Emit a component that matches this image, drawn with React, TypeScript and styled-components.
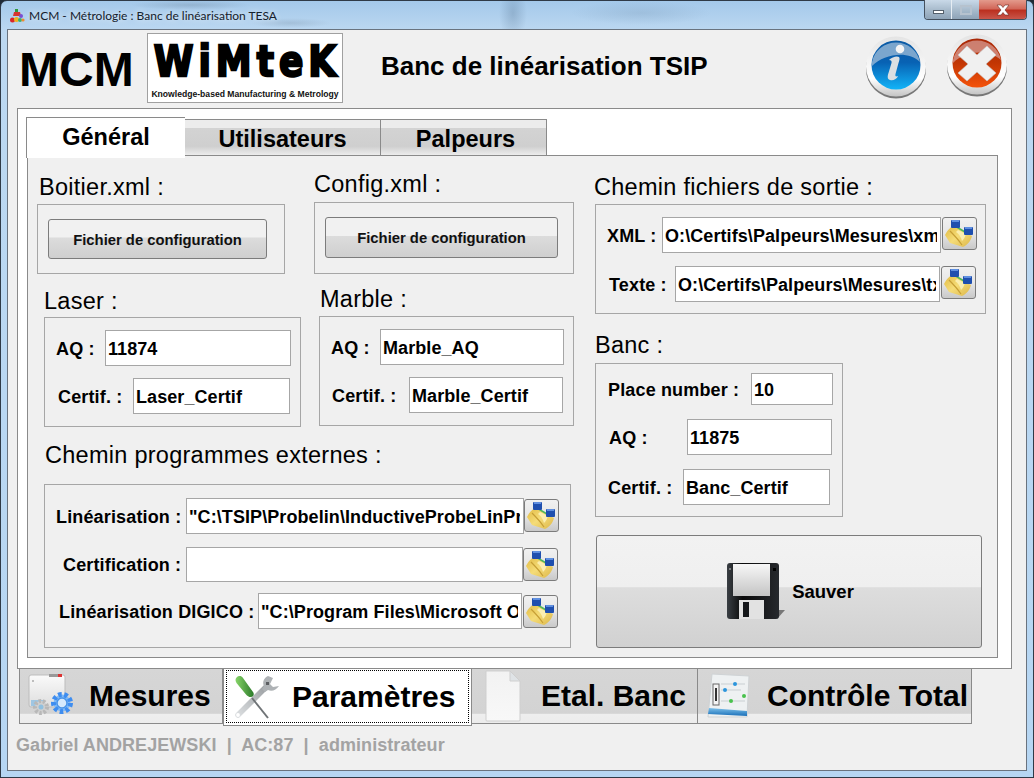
import React from "react";
import styled, { createGlobalStyle } from "styled-components";

function AppIcon() {
    return (
        <svg width="16" height="16" viewBox="0 0 16 16">
            <rect x="6" y="1" width="3" height="3" fill="#2f9a3c" />
            <path d="M5 4h6l1 4H4z" fill="#d8342e" />
            <circle cx="12" cy="8" r="2" fill="#7a4fd0" />
            <circle cx="3.500" cy="12" r="2.500" fill="#d8262a" />
            <circle cx="7.500" cy="11.500" r="2.500" fill="#f0b020" />
            <circle cx="11" cy="12" r="2" fill="#38b070" />
            <circle cx="14" cy="12" r="1.600" fill="#f08a2e" />
        </svg>
    );
}

function InfoIcon() {
    return (
        <svg width="64" height="64" viewBox="0 0 64 64">
            <defs>
                <linearGradient id="infoBlue" x1="0" y1="0" x2="0" y2="1">
                    <stop offset="0" stopColor="#0a5aa4" />
                    <stop offset="0.45" stopColor="#0862b4" />
                    <stop offset="1" stopColor="#12b4f8" />
                </linearGradient>
                <linearGradient id="ringA" x1="0" y1="0" x2="0" y2="1">
                    <stop offset="0" stopColor="#e4e4e4" />
                    <stop offset="0.7" stopColor="#ffffff" />
                    <stop offset="1" stopColor="#c4c4c4" />
                </linearGradient>
            </defs>
            <ellipse cx="32" cy="34" rx="30" ry="29.500" fill="#777" />
            <circle cx="32" cy="31.500" r="30" fill="url(#ringA)" />
            <circle cx="32" cy="30" r="24.500" fill="url(#infoBlue)" />
            <path d="M8 27a24.500 24.500 0 0 1 48 0C44 15 20 19 8 31z" fill="#8fb3d3" opacity="0.85" />
            <circle cx="36" cy="14" r="4.300" fill="#f4f4f4" />
            <path d="M25 25c3-3 8-4.500 10-3 1 1 .5 3-.5 6l-3 11c-.5 2.500.5 3 2.500 2-1 3-5 5-8 4-3-1-2.500-4-1.500-7l3-10c.5-2-.5-3-2.500-3z" fill="#dcdfe2" />
        </svg>
    );
}

function CloseIcon() {
    return (
        <svg width="64" height="64" viewBox="0 0 64 64">
            <defs>
                <linearGradient id="closeRed" x1="0" y1="0" x2="0" y2="1">
                    <stop offset="0" stopColor="#a82808" />
                    <stop offset="0.5" stopColor="#c23604" />
                    <stop offset="1" stopColor="#f4520a" />
                </linearGradient>
                <linearGradient id="ringB" x1="0" y1="0" x2="0" y2="1">
                    <stop offset="0" stopColor="#e4e4e4" />
                    <stop offset="0.7" stopColor="#ffffff" />
                    <stop offset="1" stopColor="#c4c4c4" />
                </linearGradient>
            </defs>
            <ellipse cx="32" cy="34" rx="30" ry="29.500" fill="#777" />
            <circle cx="32" cy="31.500" r="30" fill="url(#ringB)" />
            <circle cx="32" cy="30" r="24.500" fill="url(#closeRed)" />
            <path d="M8 27a24.500 24.500 0 0 1 48 0C44 16 20 17 8 30z" fill="#d79c94" opacity="0.75" />
            <path d="M22 13l10 9 10-9 9 9-10 9 10 9-9 8-10-9-10 9-9-8 10-9-10-9z" fill="#f0f0f0" stroke="#c9c9c9" strokeWidth="0.600" />
        </svg>
    );
}

function FolderIcon() {
    return (
        <svg width="33" height="31" viewBox="0 0 33 31">
            <defs>
                <linearGradient id="folderFan" x1="0" y1="0" x2="1" y2="1">
                    <stop offset="0" stopColor="#e0b840" />
                    <stop offset="0.5" stopColor="#f5dc78" />
                    <stop offset="1" stopColor="#dcb648" />
                </linearGradient>
            </defs>
            <path d="M2 17C5 11 9 8 12 7l9 7 8 4c-1 5-5 9-9 11L7 25z" fill="url(#folderFan)" />
            <path d="M7 13c4 4 8 8 12 14" stroke="#c79f36" strokeWidth="1.200" fill="none" />
            <path d="M15 12l8 4c-1 3-2 5-4 7-1-4-3-7-6-9z" fill="#fbeeb0" />
            <path d="M12 8l10 6" stroke="#4fb65a" strokeWidth="1.500" />
            <rect x="8" y="2" width="9" height="8" rx="1" fill="#1f4fae" />
            <rect x="9" y="2" width="7" height="2" fill="#5f8fe0" />
            <rect x="21" y="9" width="9" height="8" rx="1" fill="#1f4fae" />
            <rect x="22" y="9" width="7" height="2" fill="#5f8fe0" />
        </svg>
    );
}

function FloppyIcon() {
    return (
        <svg width="60" height="58" viewBox="0 0 60 58">
            <defs>
                <linearGradient id="floppyLabel" x1="0" y1="0" x2="0" y2="1">
                    <stop offset="0" stopColor="#f7f7f7" />
                    <stop offset="1" stopColor="#c4c4c4" />
                </linearGradient>
                <linearGradient id="floppyBody" x1="0" y1="0" x2="1" y2="0">
                    <stop offset="0" stopColor="#3a3f44" />
                    <stop offset="0.3" stopColor="#0a0a0a" />
                    <stop offset="1" stopColor="#26292d" />
                </linearGradient>
            </defs>
            <path d="M50 56l8-9h-6z" fill="#777" />
            <rect x="0" y="0" width="52" height="56" rx="3" fill="url(#floppyBody)" />
            <rect x="6" y="1" width="37" height="32" fill="url(#floppyLabel)" />
            <rect x="12" y="37" width="25" height="19" fill="#e2e2e2" />
            <rect x="16" y="39" width="6" height="15" fill="#15171a" />
            <circle cx="3" cy="6" r="0.800" fill="#ddd" />
            <rect x="46" y="5" width="3" height="3" fill="#000" />
        </svg>
    );
}

function MesuresIcon() {
    return (
        <svg width="50" height="46" viewBox="0 0 50 46">
            <defs>
                <linearGradient id="winBody" x1="0" y1="0" x2="0" y2="1">
                    <stop offset="0" stopColor="#fafafa" />
                    <stop offset="1" stopColor="#dedede" />
                </linearGradient>
            </defs>
            <rect x="1" y="2" width="36" height="32" rx="2" fill="url(#winBody)" stroke="#bdbdbd" />
            <rect x="21" y="1" width="13" height="3" fill="#999" />
            <rect x="30" y="1" width="4" height="3" fill="#d33" />
            <circle cx="5" cy="8" r="0.800" fill="#777" />
            <rect x="3" y="27" width="14" height="6" fill="#9fc6e2" />
            <circle cx="13" cy="34" r="6" fill="#d0d0d0" stroke="#b8b8b8" strokeWidth="4" strokeDasharray="2.500 1.700" />
            <circle cx="13" cy="34" r="2.500" fill="#8fc0e0" />
            <circle cx="34" cy="30" r="8.500" fill="#7fb9f5" stroke="#3e8df0" strokeWidth="5" strokeDasharray="3.500 2.500" />
            <circle cx="34" cy="30" r="5" fill="#d5e9fc" stroke="#4a94e8" strokeWidth="1.500" />
        </svg>
    );
}

function ToolsIcon() {
    return (
        <svg width="48" height="46" viewBox="0 0 48 46">
            <defs>
                <linearGradient id="toolGreen" x1="0" y1="0" x2="1" y2="0">
                    <stop offset="0" stopColor="#86d468" />
                    <stop offset="1" stopColor="#2c7a2a" />
                </linearGradient>
                <linearGradient id="toolSteel" x1="0" y1="1" x2="1" y2="0">
                    <stop offset="0" stopColor="#dadddf" />
                    <stop offset="1" stopColor="#9a9ea1" />
                </linearGradient>
            </defs>
            <path d="M5 41L34 12" stroke="url(#toolSteel)" strokeWidth="5.500" strokeLinecap="round" />
            <path d="M35 2c-4 2-6 6-4 10l-2 3 3 3 3-2c4 2 8 0 11-4l-6 1-3-3 3-6c-2-1-3-1-5-2z" fill="#aeb2b5" />
            <rect x="33" y="8" width="3" height="3" fill="#5c5f62" />
            <circle cx="5" cy="41" r="1.900" fill="#fff" />
            <path d="M19 24L35 44" stroke="#6f7376" strokeWidth="2" />
            <path d="M2.500 6c0-2 2-4 4-4 1.500 0 2.500 .5 3.500 2l10 14c1 1.500 1 3 0 4s-3 1.500-4.500 .5c-1-.5-1.500-1-2.500-2L3.500 9c-.5-1-1-2-1-3z" fill="url(#toolGreen)" />
        </svg>
    );
}

function DocumentIcon() {
    return (
        <svg width="36" height="52" viewBox="0 0 36 52">
            <defs>
                <linearGradient id="docSheet" x1="0" y1="0" x2="0" y2="1">
                    <stop offset="0" stopColor="#f2f2f2" />
                    <stop offset="1" stopColor="#f8f8f8" />
                </linearGradient>
            </defs>
            <path d="M1 1h24l10 10v39a1 1 0 0 1-1 1H2a1 1 0 0 1-1-1z" fill="url(#docSheet)" stroke="#cfcfcf" />
            <path d="M25 1v10h10z" fill="#dfe3e6" stroke="#cfcfcf" />
        </svg>
    );
}

function ControlIcon() {
    return (
        <svg width="46" height="46" viewBox="0 0 46 46">
            <defs>
                <linearGradient id="ctrlBar" x1="0" y1="0" x2="0" y2="1">
                    <stop offset="0" stopColor="#7cc0ea" />
                    <stop offset="1" stopColor="#1a6fb8" />
                </linearGradient>
            </defs>
            <path d="M5 1l37 2-2 41H1z" fill="#eef1f2" stroke="#cfd3d5" />
            <path d="M2 35l38 3v5L1 41z" fill="url(#ctrlBar)" />
            <rect x="6" y="11" width="6" height="21" fill="#f4f4f4" stroke="#666" />
            <rect x="8" y="15" width="2" height="13" fill="#333" />
            <path d="M14 11h24M14 17h20M14 28h24" stroke="#c9cfd2" />
            <circle cx="28" cy="11" r="2" fill="#2b95dc" />
            <circle cx="18" cy="17" r="2" fill="#2b95dc" />
            <circle cx="24" cy="28" r="2" fill="#48c24d" />
            <circle cx="37" cy="23" r="2" fill="#48c24d" />
        </svg>
    );
}

type FieldProps = {
    label: string;
    value: string;
    ml: number;
    mt: number;
    labelW: number;
    w: number;
    h?: number;
    folder?: number;
    folderTop?: number;
};

function Field({ label, value, ml, mt, labelW, w, h = 36, folder, folderTop = 0 }: FieldProps) {
    return (
        <FieldRow $ml={ml} $mt={mt}>
            <FieldLabel $w={labelW}>{label}</FieldLabel>
            <TextInput readOnly value={value} $w={w} $h={h} />
            {folder !== undefined && (
                <FolderButton $ml={folder} $mt={folderTop}>
                    <FolderIcon />
                </FolderButton>
            )}
        </FieldRow>
    );
}

export default function App() {
    return (
        <>
            <GlobalStyle />
            <Window>
                <TitleBar>
                    <AppIcon />
                    <TitleText>MCM - Métrologie : Banc de linéarisation TESA</TitleText>
                    <CaptionButtons>
                        <CaptionMin>
                            <span />
                        </CaptionMin>
                        <CaptionMax>
                            <span />
                        </CaptionMax>
                        <CaptionClose>
                            <svg width="18" height="12" viewBox="0 0 18 12">
                                <path d="M3 1h4l2 2.500L11 1h4l-4 5 4 5h-4L9 8.500 7 11H3l4-5z" fill="#fff" stroke="#6b2a22" strokeWidth="0.600" />
                            </svg>
                        </CaptionClose>
                    </CaptionButtons>
                </TitleBar>
                <Client>
                    <Header>
                        <Brand>MCM</Brand>
                        <Logo>
                            <LogoMark>WiMteK</LogoMark>
                            <LogoTagline>Knowledge-based Manufacturing &amp; Metrology</LogoTagline>
                        </Logo>
                        <AppTitle>Banc de linéarisation TSIP</AppTitle>
                        <OrbInfo>
                            <InfoIcon />
                        </OrbInfo>
                        <OrbClose>
                            <CloseIcon />
                        </OrbClose>
                    </Header>
                    <Panel>
                        <TabStrip>
                            <Tab $active $w={159}>Général</Tab>
                            <Tab $w={196}>Utilisateurs</Tab>
                            <Tab $w={166} $pl={4}>Palpeurs</Tab>
                        </TabStrip>
                        <Pane>
                            <LeftColumn>
                                <GroupRow>
                                    <Group $ml={0} $mt={17}>
                                        <Caption $ml={2} $mb={3}>Boitier.xml :</Caption>
                                        <Box $w={248} $h={70}>
                                            <ConfigButton $w={219} $h={40} $ml={10} $mt={14}>Fichier de configuration</ConfigButton>
                                        </Box>
                                    </Group>
                                    <Group $ml={29} $mt={14}>
                                        <Caption $ml={0} $mb={4}>Config.xml :</Caption>
                                        <Box $w={260} $h={72}>
                                            <ConfigButton $w={233} $h={41} $ml={10} $mt={14}>Fichier de configuration</ConfigButton>
                                        </Box>
                                    </Group>
                                </GroupRow>
                                <GroupRow $mt={11}>
                                    <Group $ml={7} $mt={2}>
                                        <Caption $ml={0} $mb={2}>Laser :</Caption>
                                        <Box $w={257} $h={110}>
                                            <Field label="AQ :" value="11874" ml={11} mt={12} labelW={49} w={186} />
                                            <Field label="Certif. :" value="Laser_Certif" ml={13} mt={12} labelW={75} w={157} />
                                        </Box>
                                    </Group>
                                    <Group $ml={18} $mt={0}>
                                        <Caption $ml={1} $mb={3}>Marble :</Caption>
                                        <Box $w={255} $h={110}>
                                            <Field label="AQ :" value="Marble_AQ" ml={11} mt={12} labelW={49} w={184} />
                                            <Field label="Certif. :" value="Marble_Certif" ml={12} mt={12} labelW={77} w={154} />
                                        </Box>
                                    </Group>
                                </GroupRow>
                                <Group $ml={7} $mt={14}>
                                    <Caption $ml={1} $mb={15}>Chemin programmes externes :</Caption>
                                    <Box $w={527} $h={164}>
                                        <Field label="Linéarisation :" value={'"C:\\TSIP\\Probelin\\InductiveProbeLinPro.exe"'} ml={11} mt={13} labelW={130} w={338} folder={0} folderTop={1} />
                                        <Field label="Certification :" value="" ml={18} mt={13} labelW={123} w={337} h={35} folder={0} folderTop={1} />
                                        <Field label="Linéarisation DIGICO :" value={'"C:\\Program Files\\Microsoft Office\\excel.exe"'} ml={14} mt={11} labelW={199} w={264} folder={1} folderTop={2} />
                                    </Box>
                                </Group>
                            </LeftColumn>
                            <RightColumn>
                                <Group $ml={0} $mt={17}>
                                    <Caption $ml={0} $mb={3}>Chemin fichiers de sortie :</Caption>
                                    <Box $w={391} $h={110} $ml={1}>
                                        <Field label="XML :" value="O:\Certifs\Palpeurs\Mesures\xml" ml={11} mt={12} labelW={55} w={279} folder={1} />
                                        <Field label="Texte :" value="O:\Certifs\Palpeurs\Mesures\txt" ml={13} mt={13} labelW={66} w={265} folder={1} />
                                    </Box>
                                </Group>
                                <Group $ml={0} $mt={17}>
                                    <Caption $ml={1} $mb={4}>Banc :</Caption>
                                    <Box $w={248} $h={154} $ml={1}>
                                        <Field label="Place number :" value="10" ml={12} mt={9} labelW={143} w={82} h={32} />
                                        <Field label="AQ :" value="11875" ml={13} mt={14} labelW={78} w={145} />
                                        <Field label="Certif. :" value="Banc_Certif" ml={12} mt={14} labelW={75} w={147} />
                                    </Box>
                                </Group>
                                <SaveButton>
                                    <FloppyIcon />
                                    <span>Sauver</span>
                                </SaveButton>
                            </RightColumn>
                        </Pane>
                    </Panel>
                    <NavBar>
                        <NavButton $w={204} $pad={8} $gap={11}>
                            <MesuresIcon />
                            <span>Mesures</span>
                        </NavButton>
                        <NavButton $active $w={249} $pad={9} $gap={11}>
                            <ToolsIcon />
                            <span>Paramètres</span>
                        </NavButton>
                        <NavButton $w={226} $pad={13} $gap={20}>
                            <DocumentIcon />
                            <span>Etal. Banc</span>
                        </NavButton>
                        <NavButton $w={274} $pad={9} $gap={14}>
                            <ControlIcon />
                            <span>Contrôle Total</span>
                        </NavButton>
                    </NavBar>
                    <Status>Gabriel ANDREJEWSKI  |  AC:87  |  administrateur</Status>
                </Client>
            </Window>
        </>
    );
}

const GlobalStyle = createGlobalStyle`
    * {
        box-sizing: border-box;
    }
    html,
    body {
        margin: 0;
        width: 1034px;
        height: 778px;
        overflow: hidden;
        background: #1f2a36;
        font-family: "Liberation Sans", Arial, sans-serif;
    }
`;

const Window = styled.div`
    width: 1034px;
    height: 778px;
    display: flex;
    flex-direction: column;
    border: 1px solid #2f3a47;
    border-radius: 7px 7px 0 0;
    background: linear-gradient(180deg, #a4c9ea 0, #bcd8f1 30px, #b6d6f3 100%);
`;

const TitleBar = styled.div`
    height: 28px;
    flex: none;
    display: flex;
    align-items: flex-start;
    padding: 7px 6px 0 8px;
    background:
        radial-gradient(ellipse 60px 5px at 190px 4px, rgba(90, 110, 130, 0.25), transparent),
        radial-gradient(ellipse 40px 5px at 290px 22px, rgba(90, 110, 130, 0.2), transparent),
        radial-gradient(ellipse 14px 28px at 512px 12px, rgba(80, 110, 140, 0.3), transparent),
        radial-gradient(ellipse 70px 12px at 640px 12px, rgba(90, 120, 150, 0.18), transparent);
`;

const TitleText = styled.div`
    margin-left: 4px;
    font-family: "Lato", sans-serif;
    font-size: 12px;
    line-height: 16px;
    color: #15202b;
    text-shadow: 0 0 6px rgba(255, 255, 255, 0.8);
`;

const CaptionButtons = styled.div`
    display: flex;
    margin-left: auto;
    margin-top: -8px;
    height: 20px;
    border: 1px solid #44505e;
    border-top: none;
    border-radius: 0 0 4px 4px;
    overflow: hidden;
`;

const CaptionMin = styled.div`
    width: 27px;
    display: flex;
    align-items: center;
    justify-content: center;
    background: linear-gradient(180deg, #c9d9e8, #a9bccd 50%, #8ea3b7);
    border-right: 1px solid #e6edf3;
    span {
        width: 11px;
        height: 4px;
        margin-top: 4px;
        background: #fff;
        border: 1px solid #55606c;
    }
`;

const CaptionMax = styled(CaptionMin)`
    width: 27px;
    border-right: none;
    span {
        width: 12px;
        height: 10px;
        margin-top: 0;
        background: transparent;
        border: 2px solid #b6c2ce;
    }
`;

const CaptionClose = styled.div`
    width: 47px;
    display: flex;
    align-items: center;
    justify-content: center;
    background: linear-gradient(180deg, #e39a8c, #d2685a 45%, #bb3020 55%, #c9564a);
`;

const Client = styled.div`
    margin: 0 6px 6px 6px;
    flex: 1;
    display: flex;
    flex-direction: column;
    background: #f0f0f0;
    border: 1px solid #69737f;
`;

const Header = styled.div`
    height: 78px;
    flex: none;
    display: flex;
    align-items: flex-start;
`;

const Brand = styled.div`
    margin: 12px 0 0 11px;
    width: 128px;
    font-size: 48px;
    line-height: 55px;
    font-weight: bold;
    color: #000;
`;

const Logo = styled.div`
    margin-top: 3px;
    width: 196px;
    height: 70px;
    background: #fff;
    border: 1px solid #a0a0a0;
    display: flex;
    flex-direction: column;
    align-items: center;
`;

const LogoMark = styled.div`
    margin-top: 8px;
    font-family: "DejaVu Sans", sans-serif;
    font-weight: bold;
    font-size: 36px;
    line-height: 40px;
    letter-spacing: 5px;
    margin-right: -5px;
    color: #000;
    -webkit-text-stroke: 2px #000;
    transform: scaleY(1.2);
`;

const LogoTagline = styled.div`
    margin-top: 7px;
    font-size: 8.6px;
    line-height: 11px;
    font-weight: bold;
    white-space: nowrap;
    color: #111;
`;

const AppTitle = styled.div`
    margin: 20px 0 0 38px;
    width: 483px;
    font-size: 26px;
    line-height: 32px;
    font-weight: bold;
    color: #000;
`;

const OrbInfo = styled.div`
    margin-top: 5px;
    width: 81px;
    height: 64px;
`;

const OrbClose = styled.div`
    margin-top: 3px;
    width: 64px;
    height: 64px;
`;

const Panel = styled.div`
    margin-left: 9px;
    width: 995px;
    height: 561px;
    flex: none;
    background: #fff;
    border: 1px solid #8a8a8a;
    padding: 8px 12px 0 8px;
    position: relative;
    z-index: 1;
`;

const TabStrip = styled.div`
    display: flex;
    align-items: flex-end;
    height: 39px;
    position: relative;
    z-index: 1;
`;

const Tab = styled.div<{ $active?: boolean; $w: number; $pl?: number }>`
    width: ${(p) => p.$w}px;
    height: ${(p) => (p.$active ? 41 : 37)}px;
    margin-bottom: ${(p) => (p.$active ? -2 : 0)}px;
    display: flex;
    justify-content: center;
    padding-top: 5px;
    padding-left: ${(p) => p.$pl ?? 0}px;
    font-size: 23.5px;
    line-height: 28px;
    font-weight: bold;
    color: #000;
    border: 1px solid #8a8a8a;
    border-bottom: ${(p) => (p.$active ? "none" : "1px solid #8a8a8a")};
    border-left-width: ${(p) => (p.$active ? 1 : 0)}px;
    border-right-width: ${(p) => (p.$active ? 0 : 1)}px;
    background: ${(p) =>
        p.$active
            ? "#fff"
            : "linear-gradient(180deg, #ececec 0, #ececec 22%, #d3d3d3 24%, #cfcfcf 75%, #ececec 100%)"};
`;

const Pane = styled.div`
    margin: -1px 0 0 1px;
    width: 971px;
    height: 503px;
    background: #f0f0f0;
    border: 1px solid #8a8a8a;
    padding-left: 9px;
    display: flex;
`;

const LeftColumn = styled.div`
    width: 537px;
    flex: none;
    display: flex;
    flex-direction: column;
`;

const RightColumn = styled.div`
    margin-left: 20px;
    display: flex;
    flex-direction: column;
`;

const GroupRow = styled.div<{ $mt?: number }>`
    display: flex;
    align-items: flex-start;
    margin-top: ${(p) => p.$mt ?? 0}px;
`;

const Group = styled.div<{ $ml: number; $mt: number }>`
    margin-left: ${(p) => p.$ml}px;
    margin-top: ${(p) => p.$mt}px;
`;

const Caption = styled.div<{ $ml: number; $mb: number }>`
    margin-left: ${(p) => p.$ml}px;
    margin-bottom: ${(p) => p.$mb}px;
    height: 28px;
    font-size: 23.5px;
    line-height: 28px;
    letter-spacing: 0.27px;
    color: #000;
    white-space: nowrap;
`;

const Box = styled.div<{ $w: number; $h: number; $ml?: number }>`
    width: ${(p) => p.$w}px;
    height: ${(p) => p.$h}px;
    margin-left: ${(p) => p.$ml ?? 0}px;
    border: 1px solid #a6a6a6;
    overflow: hidden;
`;

const ConfigButton = styled.div<{ $w: number; $h: number; $ml: number; $mt: number }>`
    width: ${(p) => p.$w}px;
    height: ${(p) => p.$h}px;
    margin: ${(p) => p.$mt}px 0 0 ${(p) => p.$ml}px;
    display: flex;
    align-items: center;
    justify-content: center;
    padding-top: 1px;
    border: 1px solid #7c7c7c;
    border-radius: 3px;
    font-size: 14.8px;
    font-weight: bold;
    color: #111;
    background: linear-gradient(180deg, #f1f1f1 0, #f1f1f1 45%, #dcdcdc 47%, #cfcfcf 100%);
`;

const FieldRow = styled.div<{ $ml: number; $mt: number }>`
    display: flex;
    align-items: center;
    margin: ${(p) => p.$mt}px 0 0 ${(p) => p.$ml}px;
`;

const FieldLabel = styled.div<{ $w: number }>`
    width: ${(p) => p.$w}px;
    flex: none;
    padding-top: 1px;
    font-size: 18px;
    line-height: 22px;
    letter-spacing: 0.15px;
    font-weight: bold;
    color: #000;
    white-space: nowrap;
`;

const TextInput = styled.input<{ $w: number; $h: number }>`
    width: ${(p) => p.$w}px;
    height: ${(p) => p.$h}px;
    flex: none;
    padding: 2px 3px 0 2px;
    border: 1px solid #a6a6a6;
    border-radius: 0;
    outline: none;
    background: #fff;
    font-family: "Liberation Sans", Arial, sans-serif;
    font-size: 18px;
    font-weight: bold;
    letter-spacing: 0.08px;
    color: #000;
`;

const FolderButton = styled.div<{ $ml: number; $mt: number }>`
    width: 35px;
    height: 33px;
    flex: none;
    align-self: flex-start;
    margin-left: ${(p) => p.$ml}px;
    margin-top: ${(p) => p.$mt}px;
    display: flex;
    align-items: center;
    justify-content: center;
    border: 1px solid #7c7c7c;
    border-radius: 3px;
    background: linear-gradient(180deg, #f1f1f1 0, #e6e6e6 50%, #c9c9c9 100%);
`;

const SaveButton = styled.div`
    width: 386px;
    height: 113px;
    margin: 18px 0 0 2px;
    display: flex;
    align-items: center;
    justify-content: center;
    gap: 5px;
    padding-left: 3px;
    border: 1px solid #7c7c7c;
    border-radius: 3px;
    font-size: 18.5px;
    font-weight: bold;
    color: #000;
    background: linear-gradient(180deg, #f2f2f2 0, #efefef 46%, #dddddd 46.500%, #d1d1d1 100%);
`;

const NavBar = styled.div`
    margin: -1px 0 0 11px;
    display: flex;
    align-items: flex-start;
    position: relative;
    z-index: 2;
`;

const NavButton = styled.div<{ $active?: boolean; $w: number; $pad: number; $gap: number }>`
    width: ${(p) => p.$w}px;
    height: ${(p) => (p.$active ? 58 : 56)}px;
    display: flex;
    align-items: center;
    gap: ${(p) => p.$gap}px;
    padding-left: ${(p) => p.$pad}px;
    border: 1px solid #8a8a8a;
    border-left-width: ${(p) => (p.$active ? 1 : 0)}px;
    font-size: 30px;
    font-weight: bold;
    color: #000;
    white-space: nowrap;
    position: relative;
    background: ${(p) =>
        p.$active
            ? "#fff"
            : "linear-gradient(180deg, #d6d6d6 0, #d3d3d3 82%, #eeeeee 84%, #ececec 100%)"};
    &:first-child {
        border-left-width: 1px;
    }
    ${(p) =>
        p.$active &&
        `&::after {
            content: "";
            position: absolute;
            inset: 1px 2px 2px 2px;
            border: 1px dotted #000;
        }`}
`;

const Status = styled.div`
    margin: 8px 0 0 8px;
    font-size: 18px;
    line-height: 22px;
    letter-spacing: 0.06px;
    font-weight: bold;
    color: #a3a3a3;
    white-space: pre;
`;
